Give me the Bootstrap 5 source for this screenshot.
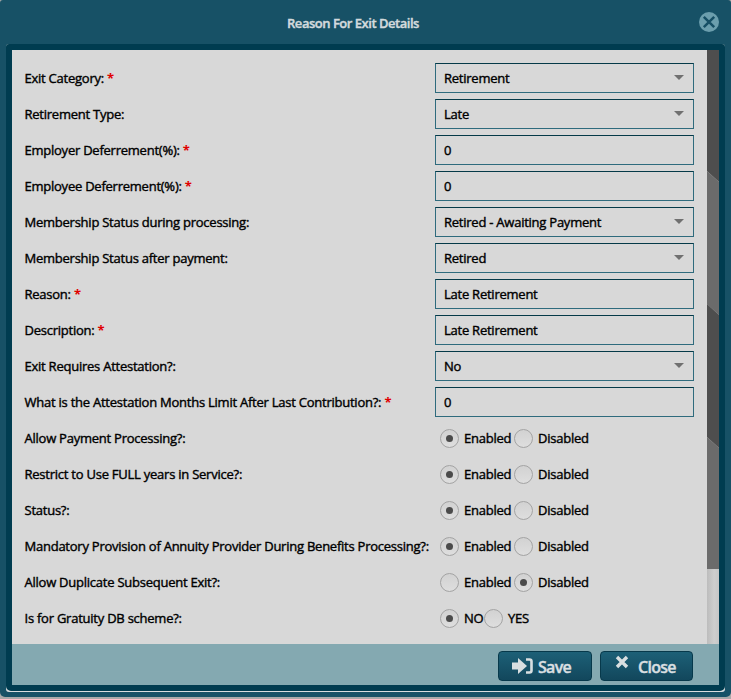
<!DOCTYPE html>
<html lang="en">
<head>
<meta charset="utf-8">
<title>Reason For Exit Details</title>
<link href="https://cdn.jsdelivr.net/npm/bootstrap@5.3.0/dist/css/bootstrap.min.css" rel="stylesheet">
<style>
body{font:13px/18px "Open Sans",sans-serif;letter-spacing:-.24px;color:#000;background:#a9a9a9;width:731px;height:699px;overflow:hidden;-webkit-text-stroke:.4px currentColor}
.dialog-window{height:697px;background:#175166;border-radius:3px 3px 5px 5px;padding:0 6px 5px}
.dialog-title{height:44px;color:#d3dadd;font-weight:600;padding:2px 25px 0 0;letter-spacing:-.48px}
.close-icon{right:6px;top:12px;width:20px;height:20px}
.frame{height:648px;background:#d8dcde;border-radius:3px}
.frame-inner{height:647px;border:6px solid #003c50;border-radius:3px 3px 5px 5px;background:#d8d8d8}
.form-area{height:594px}
.fields{padding:10px 13px 0 12.5px;min-width:0}
.field-row{height:36px}
.field-box{width:259px;height:30px;border:1px solid #2f6b7d;border-top-color:#053a48;padding:0 9px 0 8px}
.field-label{white-space:nowrap}
.req{color:#e00000;font-weight:700;-webkit-text-stroke:0}
.caret{width:0;height:0;border:5px solid transparent;border-top:5px solid #707070;border-bottom:0;margin-top:-2px}
.choices{width:254px}
.radio-dot{width:19px;height:19px;border:1px solid #a3a3a3;border-radius:50%;background:linear-gradient(#d2d2d2,#dedede);flex:none}
.radio-dot.on::after{content:"";width:7px;height:7px;border-radius:50%;background:#4b4b4b}
.opt{margin-left:5px}
.opt-first{width:50px}
.opt-no{width:20px}
.track{width:12px;height:594px;flex:none;background:linear-gradient(90deg,#bcbcbc,#cecece 60%,#c6c6c6)}
.footer-bar{height:41px;background:#84a9b1;padding:3px 26px 0 0;gap:8px}
.btn-act{height:30px;border:1px solid #07394b;border-radius:4px;background:linear-gradient(#1d6077,#12475c);color:#d9dfe1;font-size:16px;line-height:20px;font-weight:600;letter-spacing:-.7px;padding:0;-webkit-text-stroke:.4px currentColor}
.btn-act:hover{color:#fff}
.btn-act span{padding-top:1px}
.btn-save{width:94px}
.btn-close-act{width:93px}
.icon-save{margin:0 5px 0 13px}
.icon-x{margin:-9px 9px 0 14px}
</style>
<script src="https://cdn.jsdelivr.net/npm/bootstrap@5.3.0/dist/js/bootstrap.bundle.min.js"></script>
</head>
<body>
<div class="dialog-window">
  <div class="dialog-title d-flex align-items-center justify-content-center position-relative">
    <span>Reason For Exit Details</span>
    <svg class="close-icon position-absolute" viewBox="0 0 20 20"><circle cx="10" cy="10" r="10" fill="#6b9ead"/><path d="M4.800 4.800l10.400 10.400M15.200 4.800L4.800 15.200" stroke="#164f65" stroke-width="2.500"/></svg>
  </div>
  <div class="frame">
    <div class="frame-inner d-flex flex-column">
      <div class="form-area d-flex">
        <div class="fields flex-grow-1" id="fields"></div>
        <svg class="track" viewBox="0 0 12 594"><path d="M0 0h12v132L0 121z" fill="#4e4e4e"/><path d="M0 121l12 11v133L0 254z" fill="#6b6b6b"/><path d="M0 254l12 11v133L0 387z" fill="#4e4e4e"/><path d="M0 387l12 11v121H0z" fill="#6b6b6b"/></svg>
      </div>
      <div class="footer-bar d-flex align-items-center justify-content-end">
        <button class="btn btn-act btn-save d-flex align-items-center"><svg class="icon-save" width="21" height="16" viewBox="0 0 21 16"><path d="M0 4.500h6V0l9 8-9 8v-4.500H0z" fill="currentColor"/><path d="M14 1.500h3.500q2 0 2 2v9q0 2-2 2H14" fill="none" stroke="currentColor" stroke-width="2.600"/></svg><span>Save</span></button>
        <button class="btn btn-act btn-close-act d-flex align-items-center"><svg class="icon-x" width="14" height="14" viewBox="0 0 14 14"><path d="M2 2l10 10M12 2L2 12" stroke="currentColor" stroke-width="3.400"/></svg><span>Close</span></button>
      </div>
    </div>
  </div>
</div>
<script>
const rows = [
  ["Exit Category:", 1, "select", "Retirement"],
  ["Retirement Type:", 0, "select", "Late"],
  ["Employer Deferrement(%):", 1, "text", "0"],
  ["Employee Deferrement(%):", 1, "text", "0"],
  ["Membership Status during processing:", 0, "select", "Retired - Awaiting Payment"],
  ["Membership Status after payment:", 0, "select", "Retired"],
  ["Reason:", 1, "text", "Late Retirement"],
  ["Description:", 1, "text", "Late Retirement"],
  ["Exit Requires Attestation?:", 0, "select", "No"],
  ["What is the Attestation Months Limit After Last Contribution?:", 1, "text", "0"],
  ["Allow Payment Processing?:", 0, "radio", ["Enabled", "Disabled"], 0],
  ["Restrict to Use FULL years in Service?:", 0, "radio", ["Enabled", "Disabled"], 0],
  ["Status?:", 0, "radio", ["Enabled", "Disabled"], 0],
  ["Mandatory Provision of Annuity Provider During Benefits Processing?:", 0, "radio", ["Enabled", "Disabled"], 0],
  ["Allow Duplicate Subsequent Exit?:", 0, "radio", ["Enabled", "Disabled"], 1],
  ["Is for Gratuity DB scheme?:", 0, "radio", ["NO", "YES"], 0]
];
const dot = on => `<span class="radio-dot d-flex align-items-center justify-content-center ${on ? "on" : ""}"></span>`;
document.getElementById("fields").innerHTML = rows.map(([label, req, type, val, sel]) => {
  const control = type === "radio"
    ? `<div class="choices d-flex align-items-center">${dot(sel === 0)}<span class="opt ${val[0] === "NO" ? "opt-no" : "opt-first"}">${val[0]}</span>${dot(sel === 1)}<span class="opt">${val[1]}</span></div>`
    : `<div class="field-box d-flex align-items-center justify-content-between"><span>${val}</span>${type === "select" ? '<i class="caret"></i>' : ""}</div>`;
  return `<div class="field-row d-flex align-items-center justify-content-between"><span class="field-label">${label}${req ? ' <span class="req">*</span>' : ""}</span>${control}</div>`;
}).join("");
</script>
</body>
</html>
